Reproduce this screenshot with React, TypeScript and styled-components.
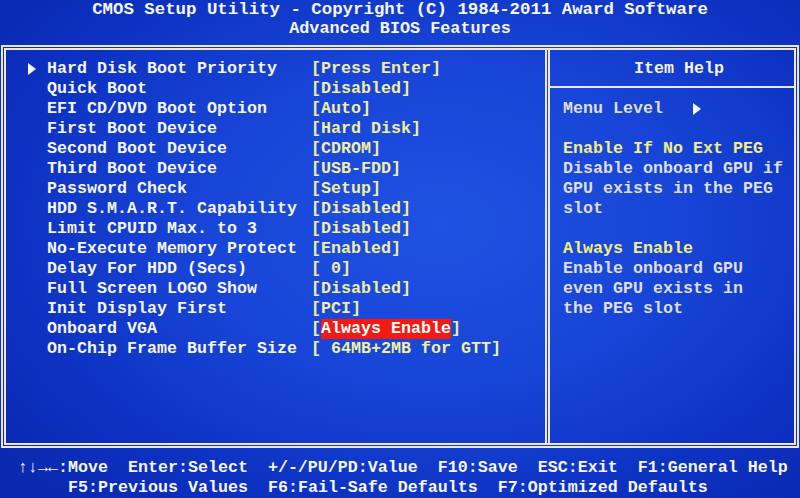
import styled, { createGlobalStyle } from "styled-components";

const GlobalStyle = createGlobalStyle`
  html, body {
    margin: 0;
    padding: 0;
    background: #0a2cb8;
  }
`;

const FONT = `"Liberation Mono", "DejaVu Sans Mono", monospace`;
const LINE = "#eee6d6";

const Screen = styled.div`
  width: 800px;
  height: 498px;
  overflow: hidden;
  display: flex;
  flex-direction: column;
  font-family: ${FONT};
  font-weight: 700;
  background: radial-gradient(
    ellipse 70% 75% at 55% 45%,
    #1f52e2 0%,
    #1744d6 45%,
    #0c30c0 80%,
    #0a29b0 100%
  );
`;

const TitleBar = styled.header`
  height: 45px;
  box-sizing: border-box;
  display: flex;
  flex-direction: column;
  align-items: center;
  color: #f6f6f6;
`;

const TitleLine = styled.div<{ $size: number }>`
  font-size: ${(p) => p.$size}px;
  line-height: 19px;
  height: 19px;
  white-space: pre;
`;

const Frame = styled.main`
  height: 406px;
  margin: 0 1px;
  box-sizing: border-box;
  border: 5px double ${LINE};
  display: grid;
  grid-template-columns: 541px 1fr;
  column-gap: 1px;
`;

const MainPanel = styled.section`
  border-right: 2px solid ${LINE};
  padding: 9px 0 0 22px;
  box-sizing: border-box;
`;

const Row = styled.div`
  display: grid;
  grid-template-columns: 19px 264px auto;
  height: 20px;
  line-height: 20px;
  font-size: 16.67px;
  white-space: pre;
`;

const Pointer = styled.span`
  display: flex;
  align-items: center;
  height: 20px;
`;

const Label = styled.span`
  color: #f5f5f2;
`;

const Value = styled.span`
  color: #f3ee9e;
`;

const Selected = styled.span`
  display: inline-block;
  background: #f21a12;
  color: #ffffff;
  height: 20px;
`;

const HelpPanel = styled.aside`
  border-left: 2px solid ${LINE};
  display: flex;
  flex-direction: column;
`;

const HelpHeader = styled.div`
  height: 36px;
  line-height: 38px;
  text-align: center;
  padding-left: 14px;
  border-bottom: 2px solid ${LINE};
  color: #f5f5f2;
  font-size: 16.67px;
`;

const HelpBody = styled.div`
  padding: 11px 0 0 13px;
  font-size: 16.67px;
  line-height: 20px;
  white-space: pre;
`;

const HelpLine = styled.div<{ $accent?: boolean }>`
  height: 20px;
  display: flex;
  align-items: center;
  color: ${(p) => (p.$accent ? "#f4ee86" : "#dedede")};
`;

const Footer = styled.footer`
  flex: 1;
  padding-top: 10px;
  color: #f6f6f6;
  font-size: 16.67px;
  line-height: 20px;
  white-space: pre;
`;

const FooterLine = styled.div<{ $indent: number }>`
  padding-left: ${(p) => p.$indent}px;
`;

const Triangle = ({ color = "#f6f6f6" }: { color?: string }) => (
  <svg width="8" height="12" viewBox="0 0 8 12">
    <polygon points="0,0 8,6 0,12" fill={color} />
  </svg>
);

type Item = { label: string; value: string; sub?: boolean; selected?: boolean };

const items: Item[] = [
  { label: "Hard Disk Boot Priority", value: "Press Enter", sub: true },
  { label: "Quick Boot", value: "Disabled" },
  { label: "EFI CD/DVD Boot Option", value: "Auto" },
  { label: "First Boot Device", value: "Hard Disk" },
  { label: "Second Boot Device", value: "CDROM" },
  { label: "Third Boot Device", value: "USB-FDD" },
  { label: "Password Check", value: "Setup" },
  { label: "HDD S.M.A.R.T. Capability", value: "Disabled" },
  { label: "Limit CPUID Max. to 3", value: "Disabled" },
  { label: "No-Execute Memory Protect", value: "Enabled" },
  { label: "Delay For HDD (Secs)", value: " 0" },
  { label: "Full Screen LOGO Show", value: "Disabled" },
  { label: "Init Display First", value: "PCI" },
  { label: "Onboard VGA", value: "Always Enable", selected: true },
  { label: "On-Chip Frame Buffer Size", value: " 64MB+2MB for GTT" },
];

const help: { text: string; accent?: boolean }[] = [
  { text: "" },
  { text: "Enable If No Ext PEG", accent: true },
  { text: "Disable onboard GPU if" },
  { text: "GPU exists in the PEG" },
  { text: "slot" },
  { text: "" },
  { text: "Always Enable", accent: true },
  { text: "Enable onboard GPU" },
  { text: "even GPU exists in" },
  { text: "the PEG slot" },
];

export default function App() {
  return (
    <>
      <GlobalStyle />
      <Screen>
        <TitleBar>
          <TitleLine $size={17.4}>
            CMOS Setup Utility - Copyright (C) 1984-2011 Award Software
          </TitleLine>
          <TitleLine $size={16.8}>Advanced BIOS Features</TitleLine>
        </TitleBar>

        <Frame>
          <MainPanel>
            {items.map((it) => (
              <Row key={it.label}>
                <Pointer>{it.sub && <Triangle />}</Pointer>
                <Label>{it.label}</Label>
                <Value>
                  [
                  {it.selected ? <Selected>{it.value}</Selected> : it.value}]
                </Value>
              </Row>
            ))}
          </MainPanel>

          <HelpPanel>
            <HelpHeader>Item Help</HelpHeader>
            <HelpBody>
              <HelpLine>
                {"Menu Level   "}
                <Triangle />
              </HelpLine>
              {help.map((h, i) => (
                <HelpLine key={i} $accent={h.accent}>
                  {h.text}
                </HelpLine>
              ))}
            </HelpBody>
          </HelpPanel>
        </Frame>

        <Footer>
          <FooterLine $indent={18}>
            {"↑↓→←:Move  Enter:Select  +/-/PU/PD:Value  F10:Save  ESC:Exit  F1:General Help"}
          </FooterLine>
          <FooterLine $indent={68}>
            {"F5:Previous Values  F6:Fail-Safe Defaults  F7:Optimized Defaults"}
          </FooterLine>
        </Footer>
      </Screen>
    </>
  );
}
